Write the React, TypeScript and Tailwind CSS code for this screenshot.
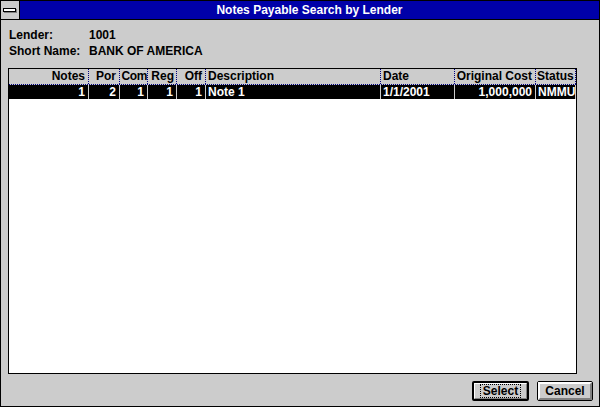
import React from "react";

const cols = [
  { h: "Notes", w: 80, a: "r", v: "1", p: "pr-[3px]" },
  { h: "Por", w: 31, a: "r", v: "2", p: "pr-[3px]" },
  { h: "Com", w: 28, a: "r", v: "1", p: "pr-0 tracking-[-0.4px]" },
  { h: "Reg", w: 29, a: "r", v: "1", p: "pr-[2px]" },
  { h: "Off", w: 29, a: "r", v: "1", p: "pr-[3px]" },
  { h: "Description", w: 175, a: "l", v: "Note 1", p: "pl-[2px]" },
  { h: "Date", w: 74, a: "l", v: "1/1/2001", p: "pl-[2px]" },
  { h: "Original Cost", w: 81, a: "r", v: "1,000,000", p: "pr-[3px]" },
  { h: "Status", w: 40, a: "l", v: "NMMU", p: "pl-[1px]" },
];

export default function App() {
  return (
    <div className="w-[600px] h-[407px] border border-black bg-[#cccccc] flex flex-col font-['Liberation_Sans',Arial,sans-serif] text-[12px] font-bold text-black box-border">
      <div className="h-[19px] flex border-b border-black bg-[#0000a8] shrink-0">
        <div className="w-[19px] h-full bg-[#cccccc] border-r border-black flex items-center justify-center">
          <div className="relative w-[14px] h-[4px]">
            <div className="absolute left-[1px] top-[1px] w-[13px] h-[4px] bg-[#808080]" />
            <div className="absolute left-0 top-0 w-[13px] h-[4px] bg-white border border-black" />
          </div>
        </div>
        <div className="flex-1 text-center text-white leading-[18px]">Notes Payable Search by Lender</div>
      </div>
      <div className="pt-[7px] pl-[8px] flex flex-col">
        <div className="flex h-[16px] leading-[16px]">
          <div className="w-[80px]">Lender:</div>
          <div>1001</div>
        </div>
        <div className="flex h-[16px] leading-[16px]">
          <div className="w-[80px]">Short Name:</div>
          <div>BANK OF AMERICA</div>
        </div>
      </div>
      <div className="mt-[9px] ml-[7px] w-[569px] h-[306px] border border-black bg-white flex flex-col overflow-hidden shrink-0">
        <div className="flex h-[16px] bg-[#cccccc] border-b border-dotted border-[#000080] shrink-0">
          {cols.map((c) => (
            <div
              key={c.h}
              style={{ width: c.w }}
              className={`h-[15px] shrink-0 leading-[15px] border-r border-dotted border-[#000080] overflow-hidden whitespace-nowrap flex ${c.a === "r" ? "justify-end" : "justify-start"} ${c.p}`}
            >
              {c.h}
            </div>
          ))}
        </div>
        <div className="flex h-[14px] bg-black text-white shrink-0">
          {cols.map((c) => (
            <div
              key={c.h}
              style={{ width: c.w }}
              className={`h-[14px] shrink-0 leading-[14px] border-r border-[#cccccc] overflow-hidden whitespace-nowrap flex ${c.a === "r" ? "justify-end pr-[3px]" : "justify-start pl-[2px]"}`}
            >
              {c.v}
            </div>
          ))}
        </div>
      </div>
      <div className="mt-[7px] flex justify-end pr-[6px] gap-[8px]">
        <div className="w-[57px] h-[20px] border-2 border-black rounded-[2px] bg-[#cccccc] flex box-border">
          <div className="flex-1 border border-t-white border-l-white border-r-[#808080] border-b-[#808080] flex items-center justify-center">
            <span className="border border-dotted border-black px-[2px] leading-[12px]">Select</span>
          </div>
        </div>
        <div className="w-[56px] h-[20px] border border-black rounded-[2px] bg-[#cccccc] flex box-border">
          <div className="flex-1 border-2 border-t-white border-l-white border-r-[#808080] border-b-[#808080] flex items-center justify-center leading-[14px]">
            Cancel
          </div>
        </div>
      </div>
    </div>
  );
}
